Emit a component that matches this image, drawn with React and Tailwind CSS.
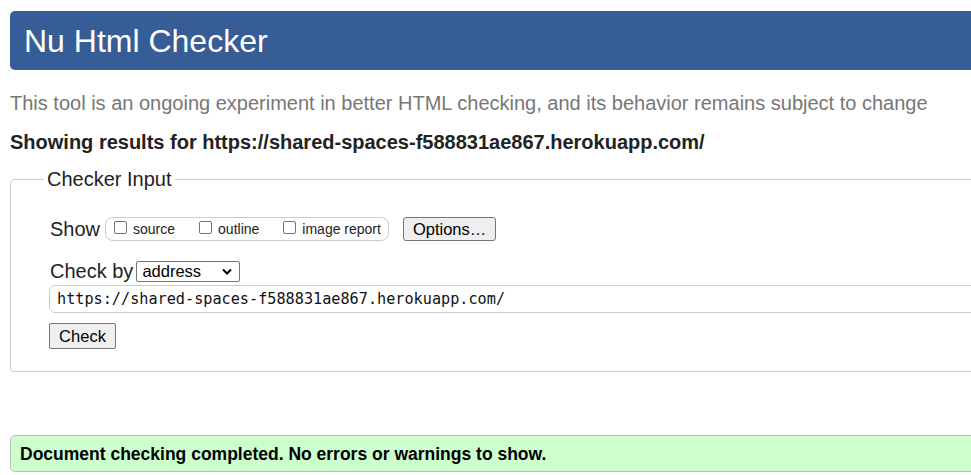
import React from 'react';

const Checkbox = ({ label, last }) => (
  <label className={`flex items-center ${last ? '' : 'mr-[24px]'}`}>
    <span className="mb-[3px] mr-[6px] block h-[13px] w-[13px] rounded-[2px] border border-[#767676] bg-white" />
    <span className="text-[14px] leading-[16px] text-[#222]">{label}</span>
  </label>
);

export default function App() {
  return (
    <div className="h-[475px] w-[971px] overflow-hidden bg-white font-['Liberation_Sans',Arial,sans-serif] text-black">
      <div className="w-[1200px] pl-[10px] pt-[11px]">
        {/* Header */}
        <h1 className="flex h-[59px] items-center rounded-l-[5px] bg-[#365d95] pl-[14px] text-[32px] leading-none text-white">
          Nu Html Checker
        </h1>

        <p className="mt-[22px] text-[20px] leading-[23px] text-[#777]">
          This tool is an ongoing experiment in better HTML checking, and its behavior remains subject to change
        </p>

        <p className="mt-[16px] text-[20px] font-bold leading-[23px] text-[#222]">
          Showing results for https://shared-spaces-f588831ae867.herokuapp.com/
        </p>

        {/* Checker input */}
        <fieldset className="mt-[14px] rounded-l-[4px] border border-[#ccc] pb-[22px] pl-[39px]">
          <legend className="ml-[-6px] px-[3px] text-[20px] leading-[23px] text-[#222]">Checker Input</legend>

          <div className="mt-[26px] flex h-[24px] items-center">
            <span className="text-[20px] leading-[23px] text-[#222]">Show</span>
            <div className="ml-[5px] flex h-[24px] items-center rounded-[8px] border border-[#ccc] pl-[8px] pr-[7px]">
              <Checkbox label="source" />
              <Checkbox label="outline" />
              <Checkbox label="image report" last />
            </div>
            <button className="ml-[14px] h-[24px] rounded-[3px] border border-[#767676] bg-[#efefef] px-[9px] text-[16.5px] leading-[18px] text-black">
              Options…
            </button>
          </div>

          <div className="mt-[18px] flex h-[24px] items-center">
            <span className="text-[20px] leading-[23px] text-[#222]">Check by</span>
            <div className="ml-[3px] flex h-[21px] w-[104px] items-center justify-between rounded-[2px] border border-[#767676] bg-white pl-[5px] pr-[7px]">
              <span className="text-[16.5px] leading-[18px] text-black">address</span>
              <svg width="10" height="7" viewBox="0 0 10 7" fill="none">
                <path d="M1 1.5l4 4 4-4" stroke="#000" strokeWidth="2" />
              </svg>
            </div>
          </div>

          <div className="ml-[-1px] mt-[2px] flex h-[28px] items-center rounded-l-[6px] border border-[#ccc] pl-[7px]">
            <span className="font-['DejaVu_Sans_Mono',monospace] text-[15.2px] leading-[18px] text-[#111]">
              https://shared-spaces-f588831ae867.herokuapp.com/
            </span>
          </div>

          <button className="ml-[-1px] mt-[10px] h-[26px] w-[67px] rounded-[2px] border border-[#767676] bg-[#efefef] text-[16.5px] leading-[18px] text-black">
            Check
          </button>
        </fieldset>

        {/* Result */}
        <div className="mt-[63px] flex h-[37px] items-center rounded-l-[5px] border border-[#bbb] bg-[#ccffcc] pl-[9px]">
          <span className="text-[17.5px] font-bold leading-[20px] text-black">
            Document checking completed. No errors or warnings to show.
          </span>
        </div>
      </div>
    </div>
  );
}
